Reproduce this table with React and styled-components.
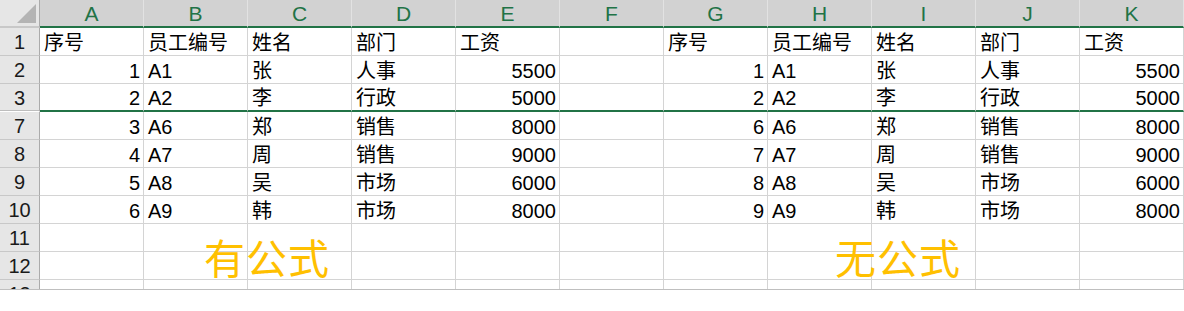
import React from "react";
import styled, { createGlobalStyle } from "styled-components";

const GlobalStyle = createGlobalStyle`
  html, body { margin: 0; padding: 0; background: #ffffff; }
  * { box-sizing: border-box; }
`;

const GREEN = "#217346";
const GRID = "#d4d4d4";

const Sheet = styled.div`
  position: relative;
  width: 1184px;
  height: 290px;
  overflow: hidden;
  border-bottom: 1px solid #bfbfbf;
  font-family: "Liberation Sans", "Noto Sans CJK SC", sans-serif;
  color: #000;
`;

const Grid = styled.div`
  display: grid;
  grid-template-columns: 40px repeat(11, 104px);
  grid-auto-rows: 28px;
`;

const Corner = styled.div`
  position: relative;
  background: #e6e6e6;
  border-right: 1px solid #ababab;
  border-bottom: 2px solid #c8c8c8;
  &::after {
    content: "";
    position: absolute;
    right: 3px;
    bottom: 3px;
    width: 0;
    height: 0;
    border-left: 19px solid transparent;
    border-bottom: 19px solid #b4b4b4;
  }
`;

const ColHead = styled.div`
  background: #d2d2d2;
  border-right: 1px solid #e2e2e2;
  border-bottom: 2px solid ${GREEN};
  color: ${GREEN};
  font-size: 21px;
  display: flex;
  align-items: center;
  justify-content: center;
  padding-top: 1px;
`;

const RowHead = styled.div`
  background: #e6e6e6;
  border-right: 1px solid #ababab;
  border-bottom: 1px solid ${(p) => (p.$hiddenAfter ? "#ffffff" : "#c8c8c8")};
  box-shadow: ${(p) => (p.$hiddenAfter ? "inset 0 -1px 0 #bdbdbd" : "none")};
  font-size: 20px;
  color: #1a1a1a;
  display: flex;
  align-items: flex-end;
  justify-content: center;
  line-height: 22px;
  padding-bottom: 2px;
`;

const Cell = styled.div`
  border-right: 1px solid ${GRID};
  border-bottom: ${(p) => (p.$green ? `2px solid ${GREEN}` : `1px solid ${GRID}`)};
  font-size: 20px;
  display: flex;
  align-items: flex-end;
  justify-content: ${(p) => (p.$right ? "flex-end" : "flex-start")};
  padding: 0 3px 1px 4px;
  line-height: 22px;
  white-space: nowrap;
  overflow: visible;
`;

const Label = styled.div`
  position: absolute;
  top: ${(p) => p.$top}px;
  left: ${(p) => p.$left}px;
  font-family: "Noto Sans CJK SC", sans-serif;
  font-size: 41px;
  line-height: 1;
  color: #ffc000;
  letter-spacing: 1px;
  pointer-events: none;
`;

const cols = ["A", "B", "C", "D", "E", "F", "G", "H", "I", "J", "K"];
const header = ["序号", "员工编号", "姓名", "部门", "工资"];
const people = [
  ["A1", "张", "人事", "5500"],
  ["A2", "李", "行政", "5000"],
  ["A6", "郑", "销售", "8000"],
  ["A7", "周", "销售", "9000"],
  ["A8", "吴", "市场", "6000"],
  ["A9", "韩", "市场", "8000"],
];
const leftIds = [1, 2, 3, 4, 5, 6];
const rightIds = [1, 2, 6, 7, 8, 9];
const rowNums = [2, 3, 7, 8, 9, 10];

function tableCells(id, p) {
  return [
    { v: String(id), right: true },
    { v: p[0] },
    { v: p[1] },
    { v: p[2] },
    { v: p[3], right: true },
  ];
}

export default function App() {
  const rows = [];
  // row 1
  rows.push({
    num: 1,
    cells: [
      ...header.map((v) => ({ v })),
      { v: "" },
      ...header.map((v) => ({ v })),
    ],
  });
  people.forEach((p, i) => {
    rows.push({
      num: rowNums[i],
      green: rowNums[i] === 3,
      cells: [...tableCells(leftIds[i], p), { v: "" }, ...tableCells(rightIds[i], p)],
    });
  });
  [11, 12, 13].forEach((n) => {
    rows.push({ num: n, cells: cols.map(() => ({ v: "" })) });
  });

  return (
    <>
      <GlobalStyle />
      <Sheet>
        <Grid>
          <Corner />
          {cols.map((c) => (
            <ColHead key={c}>{c}</ColHead>
          ))}
          {rows.map((r) => (
            <React.Fragment key={r.num}>
              <RowHead $hiddenAfter={r.green}>{r.num}</RowHead>
              {r.cells.map((c, j) => (
                <Cell key={j} $right={c.right} $green={r.green}>
                  {c.v}
                </Cell>
              ))}
            </React.Fragment>
          ))}
        </Grid>
        <Label $top={236} $left={204}>有公式</Label>
        <Label $top={236} $left={835}>无公式</Label>
      </Sheet>
    </>
  );
}
